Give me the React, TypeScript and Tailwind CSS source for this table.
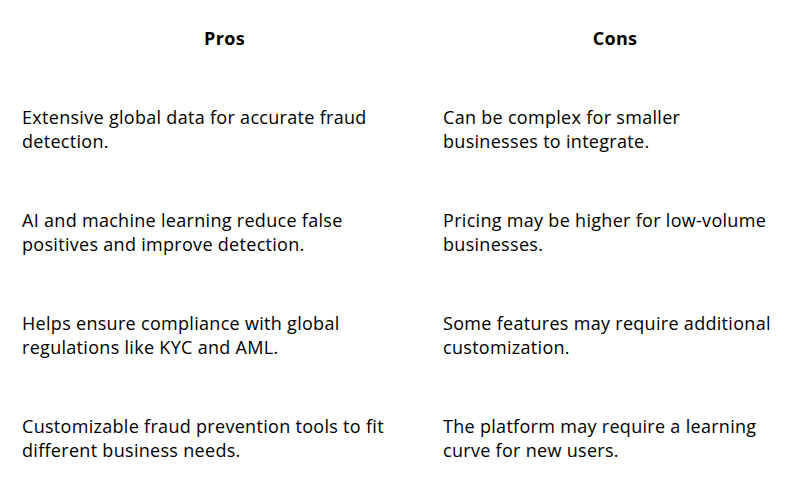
const rows = [
  {
    pro: "Extensive global data for accurate fraud detection.",
    con: "Can be complex for smaller businesses to integrate.",
  },
  {
    pro: "AI and machine learning reduce false positives and improve detection.",
    con: "Pricing may be higher for low-volume businesses.",
  },
  {
    pro: "Helps ensure compliance with global regulations like KYC and AML.",
    con: "Some features may require additional customization.",
  },
  {
    pro: "Customizable fraud prevention tools to fit different business needs.",
    con: "The platform may require a learning curve for new users.",
  },
];

export default function App() {
  return (
    <div className="w-[795px] h-[480px] overflow-hidden bg-white text-black font-['Open_Sans',sans-serif] text-[18px] leading-[23.4px] tracking-[0.3px]">
      <div className="pl-[14px]">
        {/* header row */}
        <div className="grid grid-cols-[421px_360px] h-[77px] items-center font-bold">
          <div className="text-center">Pros</div>
          <div className="text-center">Cons</div>
        </div>

        {rows.map((r, i) => (
          <div key={i} className="grid grid-cols-[421px_360px] h-[103px] pt-[2px] items-center">
            <div className="pl-[8px] pr-[36px]">{r.pro}</div>
            <div className="pl-[8px] pr-[24px]">{r.con}</div>
          </div>
        ))}
      </div>
    </div>
  );
}
